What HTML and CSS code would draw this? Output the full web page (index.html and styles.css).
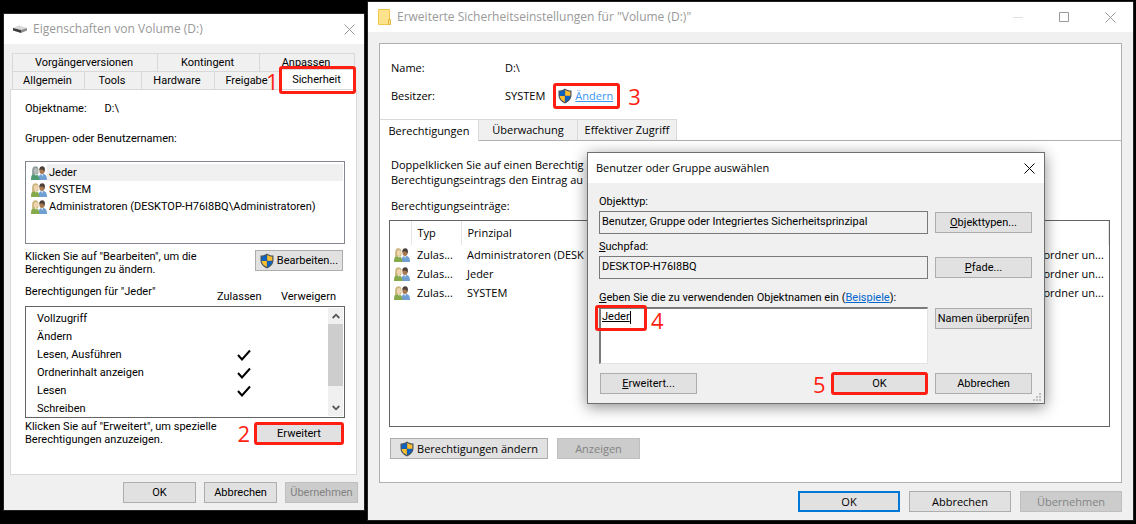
FILE: index.html
```html
<!DOCTYPE html>
<html lang="de">
<head>
    <meta charset="UTF-8">
    <meta name="viewport" content="width=device-width, initial-scale=1.0">
    <title>Volume (D:) - Berechtigungen</title>
    <link rel="stylesheet" href="styles.css">
</head>
<body>
    <!-- shared icons -->
    <svg class="sprite" aria-hidden="true">
        <symbol id="shield" viewBox="0 0 14 16">
            <path d="M7 .5C5 2 3 2.600 .5 2.600V7c0 4 2.500 6.500 6.500 8.500C11 13.500 13.500 11 13.500 7V2.600C11 2.600 9 2 7 .5z" fill="#4a5560"/>
            <path d="M6.800 2C5.200 3 3.500 3.600 1.700 3.700V7.800H6.800z" fill="#0a63c4"/>
            <path d="M7.200 2C8.800 3 10.500 3.600 12.300 3.700V7.800H7.200z" fill="#fdbf2d"/>
            <path d="M1.700 8H6.800V14.100C3.800 12.500 1.900 10.600 1.700 8z" fill="#fdbf2d"/>
            <path d="M12.300 8H7.200V14.100C10.200 12.500 12.100 10.600 12.300 8z" fill="#0a63c4"/>
        </symbol>
        <symbol id="users" viewBox="0 0 16 14">
            <path d="M7.500 14c0-4.500 1.200-6 4-6s4.500 1.500 4.500 6z" fill="#6f9fd2"/>
            <path d="M9.800 7.500h2.600l-1.200 3z" fill="#d9e6f2"/>
            <ellipse cx="11" cy="4.500" rx="2.600" ry="3.600" fill="#a87850"/>
            <path d="M8.300 4c0-2.800 1.400-3.700 3-3.700 1.800 0 2.900 1.400 2.500 4.200l-.8 1.500c0-2-.8-3-4.700-2z" fill="#4b4039"/>
            <path d="M0 14c0-4.500 1-6 3.800-6 2.600 0 4.200 1.300 4.700 6z" fill="var(--shirt, #86a94c)"/>
            <path d="M1.200 9C.8 3 1.500.3 4.500.3S7.800 3 7.200 8z" fill="var(--hair, #c9b57c)"/>
            <ellipse cx="4.900" cy="5" rx="2" ry="3" fill="var(--face, #efd6b0)"/>
            <path d="M3.800 8h2l-.8 2z" fill="#e8edd8"/>
        </symbol>
        <symbol id="close" viewBox="0 0 11 11">
            <path d="M.5.5l10 10M10.500.5l-10 10" fill="none" stroke="currentColor"/>
        </symbol>
        <symbol id="check" viewBox="0 0 14 12">
            <path d="M1 6l4 4.500L13 1.500" fill="none" stroke="#000" stroke-width="2"/>
        </symbol>
        <symbol id="chevron" viewBox="0 0 8 6">
            <path d="M.7 5L4 1.700 7.300 5" fill="none" stroke="#555" stroke-width="1.800"/>
        </symbol>
    </svg>

    <main class="desktop">
        <section class="window properties">
            <header class="titlebar">
                <svg class="drive" viewBox="0 0 14 8">
                    <path d="M0 3L6 .5l8 2.500-6 2z" fill="#d8d8d8"/>
                    <path d="M0 3l8 2v3L0 5.500z" fill="#3c3c3c"/>
                    <path d="M8 5l6-2v2.500L8 8z" fill="#8c8c8c"/>
                </svg>
                <h1>Eigenschaften von Volume (D:)</h1>
                <button class="win-btn" aria-label="Schließen"><svg><use href="#close"/></svg></button>
            </header>
            <div class="prop-body">
                <nav class="tabs">
                    <div class="tab-row back">
                        <button>Vorgängerversionen</button>
                        <button>Kontingent</button>
                        <button>Anpassen</button>
                    </div>
                    <div class="tab-row front">
                        <button>Allgemein</button>
                        <button>Tools</button>
                        <button>Hardware</button>
                        <button>Freigabe</button>
                        <button class="active">Sicherheit<span class="mark"></span><span class="step">1</span></button>
                    </div>
                </nav>
                <div class="sheet">
                    <p class="object"><span>Objektname:</span><span>D:\</span></p>
                    <p class="groups-label">Gruppen- oder Benutzernamen:</p>
                    <ul class="groups">
                        <li class="selected"><svg class="users teal"><use href="#users"/></svg><span>Jeder</span></li>
                        <li><svg class="users"><use href="#users"/></svg><span>SYSTEM</span></li>
                        <li><svg class="users"><use href="#users"/></svg><span>Administratoren (DESKTOP-H76I8BQ\Administratoren)</span></li>
                    </ul>
                    <div class="hint">
                        <p>Klicken Sie auf "Bearbeiten", um die<br>Berechtigungen zu ändern.</p>
                        <button class="btn edit"><svg class="shield"><use href="#shield"/></svg>Bearbeiten...</button>
                    </div>
                    <div class="perm-head">
                        <span>Berechtigungen für "Jeder"</span>
                        <span class="col">Zulassen</span>
                        <span class="col">Verweigern</span>
                    </div>
                    <div class="perm-box">
                        <table class="perms">
                            <tr><td>Vollzugriff</td><td></td></tr>
                            <tr><td>Ändern</td><td></td></tr>
                            <tr><td>Lesen, Ausführen</td><td><svg><use href="#check"/></svg></td></tr>
                            <tr><td>Ordnerinhalt anzeigen</td><td><svg><use href="#check"/></svg></td></tr>
                            <tr><td>Lesen</td><td><svg><use href="#check"/></svg></td></tr>
                            <tr><td>Schreiben</td><td></td></tr>
                        </table>
                        <div class="scrollbar">
                            <svg><use href="#chevron"/></svg>
                            <div class="thumb"></div>
                            <svg class="down"><use href="#chevron"/></svg>
                        </div>
                    </div>
                    <div class="hint advanced">
                        <p>Klicken Sie auf "Erweitert", um spezielle<br>Berechtigungen anzuzeigen.</p>
                        <button class="btn">Erweitert<span class="mark"></span><span class="step">2</span></button>
                    </div>
                </div>
                <footer class="actions">
                    <button class="btn">OK</button>
                    <button class="btn">Abbrechen</button>
                    <button class="btn" disabled>Übernehmen</button>
                </footer>
            </div>
        </section>

        <section class="window security">
            <header class="titlebar">
                <svg class="folder" viewBox="0 0 13 16">
                    <path d="M.5.5h11v15H.5z" fill="#ffe28c" stroke="#efc84a"/>
                    <path d="M10.500 10.500h2v5h-2z" fill="#ffe28c" stroke="#e0b83c"/>
                </svg>
                <h1>Erweiterte Sicherheitseinstellungen für "Volume (D:)"</h1>
                <button class="win-btn faint" aria-label="Minimieren"><svg viewBox="0 0 11 11"><path d="M0 5.500h10" stroke="currentColor"/></svg></button>
                <button class="win-btn" aria-label="Maximieren"><svg viewBox="0 0 11 11"><path d="M.5.5h9v9h-9z" fill="none" stroke="currentColor"/></svg></button>
                <button class="win-btn" aria-label="Schließen"><svg><use href="#close"/></svg></button>
            </header>
            <div class="sec-body">
                <div class="sec-panel">
                    <dl class="info">
                        <dt>Name:</dt>
                        <dd>D:\</dd>
                        <dt>Besitzer:</dt>
                        <dd>SYSTEM <span class="change"><svg class="shield"><use href="#shield"/></svg><a href="#">Ändern</a><span class="mark"></span><span class="step">3</span></span></dd>
                    </dl>
                    <nav class="sec-tabs">
                        <button class="active">Berechtigungen</button>
                        <button>Überwachung</button>
                        <button>Effektiver Zugriff</button>
                    </nav>
                    <div class="sec-content">
                        <p class="intro">Doppelklicken Sie auf einen Berechtig<br>Berechtigungseintrags den Eintrag au</p>
                        <p class="entries-label">Berechtigungseinträge:</p>
                        <div class="entries-box">
                            <table class="entries">
                                <thead>
                                    <tr><th class="c-icon"></th><th class="c-type">Typ</th><th>Prinzipal</th><th class="c-scope"></th></tr>
                                </thead>
                                <tbody>
                                    <tr><td><svg class="users"><use href="#users"/></svg></td><td>Zulas...</td><td>Administratoren (DESK</td><td>ordner un...</td></tr>
                                    <tr><td><svg class="users"><use href="#users"/></svg></td><td>Zulas...</td><td>Jeder</td><td>ordner un...</td></tr>
                                    <tr><td><svg class="users"><use href="#users"/></svg></td><td>Zulas...</td><td>SYSTEM</td><td>ordner un...</td></tr>
                                </tbody>
                            </table>
                        </div>
                        <div class="entry-actions">
                            <button class="btn wide"><svg class="shield"><use href="#shield"/></svg>Berechtigungen ändern</button>
                            <button class="btn" disabled>Anzeigen</button>
                        </div>
                    </div>
                </div>
                <footer class="actions">
                    <button class="btn default">OK</button>
                    <button class="btn">Abbrechen</button>
                    <button class="btn" disabled>Übernehmen</button>
                </footer>
            </div>

            <div class="dialog" role="dialog" aria-label="Benutzer oder Gruppe auswählen">
                <header class="titlebar">
                    <h2>Benutzer oder Gruppe auswählen</h2>
                    <button class="win-btn" aria-label="Schließen"><svg><use href="#close"/></svg></button>
                </header>
                <form class="dialog-form">
                    <label for="type">Objekttyp:</label>
                    <input id="type" type="text" readonly value="Benutzer, Gruppe oder Integriertes Sicherheitsprinzipal">
                    <button type="button" class="btn"><u>O</u>bjekttypen...</button>
                    <label for="path"><u>S</u>uchpfad:</label>
                    <input id="path" type="text" readonly value="DESKTOP-H76I8BQ">
                    <button type="button" class="btn"><u>P</u>fade...</button>
                    <label for="names" class="names-label"><u>G</u>eben Sie die zu verwendenden Objektnamen ein (<a href="#">Beispiele</a>):</label>
                    <div class="names">
                        <textarea id="names">Jeder</textarea>
                        <span class="caret"></span>
                        <span class="mark"></span>
                        <span class="step">4</span>
                    </div>
                    <button type="button" class="btn"><span>Namen überprü<u>f</u>en</span></button>
                    <div class="dialog-actions">
                        <button type="button" class="btn"><u>E</u>rweitert...</button>
                        <button type="button" class="btn ok">OK<span class="mark"></span><span class="step">5</span></button>
                        <button type="button" class="btn">Abbrechen</button>
                    </div>
                </form>
                <svg class="grip" viewBox="0 0 8 8">
                    <path d="M6 0h2v2H6zM3 3h2v2H3zM6 3h2v2H6zM0 6h2v2H0zM3 6h2v2H3zM6 6h2v2H6z" fill="#bfbfbf"/>
                </svg>
            </div>
        </section>
    </main>
</body>
</html>
```
FILE: styles.css
```css
* {
    box-sizing: border-box;
}

body {
    margin: 0;
    background: #000;
    color: #000;
    font: 11px/16px "Open Sans", "Noto Sans", sans-serif;
}

h1, h2, p, ul, dl, dd {
    margin: 0;
    padding: 0;
    font-size: 11px;
    font-weight: normal;
}

button, input, textarea {
    font: inherit;
    color: inherit;
    border-radius: 0;
}

.sprite {
    position: absolute;
    width: 0;
    height: 0;
}

.desktop {
    display: flex;
    align-items: flex-start;
    gap: 2px;
    padding: 1px 2px 3px 3px;
}

/* windows */
.window {
    border: 1px solid #222;
    background: #f0f0f0;
}

.titlebar {
    display: flex;
    align-items: center;
    height: 30px;
    background: #fff;
    color: #999;
}

.titlebar h1, .titlebar h2 {
    flex: 1;
    white-space: nowrap;
}

.window > .titlebar h1 {
    font-size: 12px;
}

.win-btn {
    width: 46px;
    height: 30px;
    padding: 0;
    border: 0;
    background: none;
    line-height: 0;
}

.win-btn svg {
    width: 11px;
    height: 11px;
}

.win-btn.faint {
    color: #e0e0e0;
}

/* buttons */
.btn {
    position: relative;
    display: flex;
    align-items: center;
    justify-content: center;
    height: 21px;
    padding: 0;
    border: 1px solid #adadad;
    background: #e1e1e1;
    white-space: nowrap;
}

.btn:disabled {
    border-color: #bfbfbf;
    background: #ccc;
    color: #838383;
}

.btn.default {
    border: 2px solid #0078d7;
}

.actions {
    display: flex;
    justify-content: flex-end;
    gap: 8px;
}

.shield {
    width: 14px;
    height: 16px;
    margin-right: 3px;
}

.users {
    width: 16px;
    height: 14px;
    flex: none;
}

.users.teal {
    --shirt: #4f9a72;
    --hair: #8f9c9c;
    --face: #b4bcb8;
}

/* red markers */
.mark {
    position: absolute;
    inset: -2px;
    border: 3px solid #ff1f12;
    border-radius: 3px;
    pointer-events: none;
}

.step {
    position: absolute;
    color: #ff1f12;
    font: 22px/24px "Open Sans", "Noto Sans", sans-serif;
}

/* properties window */
.properties {
    flex: none;
    width: 362px;
    margin-top: 12px;
    font-family: "Roboto", sans-serif;
}

.properties .titlebar {
    padding-left: 9px;
    font-family: "Open Sans", "Noto Sans", sans-serif;
}

.properties .win-btn {
    width: 30px;
}

.drive {
    width: 14px;
    height: 8px;
    margin-right: 6px;
}

.prop-body {
    padding: 9px 7px 7px 6px;
}

.tabs {
    padding: 0 2px;
}

.tab-row {
    display: grid;
}

.tab-row.back {
    grid-template-columns: 145fr 102fr 96fr;
}

.tab-row.front {
    grid-template-columns: 72fr 57fr 73fr 66fr 75fr;
}

.tab-row button {
    position: relative;
    height: 18px;
    padding: 0 2px 0 0;
    border: 1px solid #d9d9d9;
    border-width: 1px 0 0 1px;
    background: #f0f0f0;
    line-height: 17px;
}

.tab-row button:last-child {
    border-right-width: 1px;
}

.tab-row .active {
    background: #fff;
    height: 20px;
    margin: -2px 0 0;
}

.tab-row .mark {
    inset: -4px -2px -5px;
}

.tab-row .step {
    top: -1px;
    left: -15px;
}

.sheet {
    padding: 11px 11px 28px 14px;
    border: 1px solid #d9d9d9;
    background: #fff;
}

.object {
    display: flex;
    gap: 18px;
}

.groups-label {
    margin-top: 14px;
}

.groups {
    height: 83px;
    margin-top: 14px;
    padding: 2px 1px 1px 5px;
    border: 1px solid #828790;
    list-style: none;
}

.groups li {
    display: flex;
    align-items: center;
    height: 17px;
}

.groups span {
    flex: 1;
    padding-left: 2px;
    line-height: 17px;
}

.groups .selected span {
    background: #f0f0f0;
}

.hint {
    display: flex;
    justify-content: space-between;
    margin-top: 6px;
    padding-right: 2px;
    line-height: 13px;
}

.hint .btn {
    width: 88px;
}

.perm-head {
    display: flex;
    align-items: flex-start;
    height: 22px;
    margin-top: 8px;
}

.perm-head span:first-child {
    flex: 1;
}

.perm-head .col {
    width: 64px;
    padding-top: 5px;
}

.perm-box {
    display: flex;
    height: 112px;
    border: 1px solid #646464;
    padding: 1px;
    overflow: hidden;
}

.perms {
    flex: 1;
    align-self: flex-start;
    margin-top: 2px;
    border-collapse: collapse;
}

.perms td {
    height: 18px;
    padding: 0 0 0 10px;
}

.perms td:last-child {
    width: 91px;
    padding: 0;
}

.perms svg {
    display: block;
    width: 14px;
    height: 12px;
}

.scrollbar {
    display: flex;
    flex-direction: column;
    align-items: center;
    width: 15px;
    background: #f0f0f0;
}

.scrollbar svg {
    width: 8px;
    height: 6px;
    margin: 5px 0;
}

.scrollbar .down {
    margin-top: auto;
    transform: rotate(180deg);
}

.thumb {
    width: 15px;
    height: 62px;
    background: #cdcdcd;
}

.advanced {
    margin-top: 2px;
}

.advanced .btn {
    margin-top: 3px;
}

.advanced .step {
    top: -3px;
    right: 92px;
}

.properties .actions {
    margin: 7px -1px 0 0;
}

.properties .actions .btn {
    width: 73px;
}

/* advanced security window */
.security {
    position: relative;
    flex: 1;
    min-width: 0;
}

.security > .titlebar {
    padding-left: 10px;
}

.folder {
    width: 13px;
    height: 16px;
    margin-right: 6px;
}

.sec-body {
    padding: 11px 11px 8px;
}

.sec-panel {
    border: 1px solid #b0b0b0;
    background: #fff;
}

.info {
    display: grid;
    grid-template-columns: 114px 1fr;
    gap: 12px 0;
    padding: 16px 11px 15px;
}

.info dd {
    display: flex;
    height: 16px;
}

.change {
    position: relative;
    display: flex;
    margin-left: 13px;
}

.change a {
    color: #3a96f0;
}

.change .mark {
    inset: -5px -7px -5px -5px;
}

.change .step {
    top: -4px;
    left: 70px;
}

.sec-tabs {
    display: flex;
    border-bottom: 1px solid #b0b0b0;
}

.sec-tabs button {
    height: 21px;
    padding: 0 6px;
    min-width: 99px;
    border: 1px solid #d9d9d9;
    border-left: 0;
    border-bottom: 0;
    background: #f0f0f0;
    line-height: 20px;
}

.sec-tabs .active {
    background: #fff;
    margin-bottom: -1px;
    height: 22px;
}

.sec-content {
    padding: 16px 11px 23px 9px;
}

.intro, .entries-label {
    padding-left: 2px;
    line-height: 15px;
    white-space: nowrap;
}

.entries-label {
    margin-top: 11px;
}

.entries-box {
    height: 207px;
    margin-top: 7px;
    border: 1px solid #646464;
    overflow: hidden;
}

.entries {
    width: 100%;
    table-layout: fixed;
    border-collapse: collapse;
}

.entries th {
    height: 24px;
    padding: 0 0 0 6px;
    border-right: 1px solid #e5e5e5;
    font-weight: normal;
    text-align: left;
}

.entries td {
    height: 19px;
    padding: 0 0 0 6px;
    white-space: nowrap;
}

.entries td:first-child {
    padding-left: 4px;
    line-height: 0;
}

.c-icon {
    width: 21px;
}

.c-type {
    width: 50px;
}

.c-scope {
    width: 71px;
}

.entry-actions {
    display: flex;
    gap: 9px;
    margin-top: 11px;
    padding-left: 1px;
}

.entry-actions .btn {
    width: 83px;
}

.entry-actions .wide {
    width: 158px;
}

.security .actions {
    gap: 9px;
    margin-top: 8px;
}

.security .actions .btn {
    width: 102px;
}

/* select user dialog */
.dialog {
    position: absolute;
    top: 150px;
    right: 88px;
    width: 458px;
    border: 1px solid #6e6e6e;
    background: #f0f0f0;
    box-shadow: 0 3px 14px rgba(0, 0, 0, 0.45);
    font-family: "Roboto", sans-serif;
}

.dialog .titlebar {
    padding-left: 8px;
    color: #000;
    font-family: "Open Sans", "Noto Sans", sans-serif;
}

.dialog .win-btn {
    width: 30px;
}

.dialog-form {
    display: grid;
    grid-template-columns: 1fr 97px;
    column-gap: 7px;
    padding: 11px 12px 9px 11px;
}

.dialog-form label {
    grid-column: 1 / -1;
    height: 17px;
    line-height: 16px;
}

.dialog-form input {
    height: 23px;
    min-width: 0;
    margin-bottom: 5px;
    padding: 0 2px 2px;
    border: 1px solid #7a7a7a;
    background: #f0f0f0;
}

.dialog-form > .btn {
    margin-top: 1px;
}

.dialog-form a {
    color: #0066cc;
}

.dialog-form .names-label {
    margin-top: 6px;
}

.names {
    position: relative;
    height: 57px;
}

.names textarea {
    display: block;
    width: 100%;
    height: 57px;
    padding: 0 1px;
    border: 1px solid #e3e3e3;
    border-top: 2px solid #7a7a7a;
    border-left: 2px solid #7a7a7a;
    background: #fff;
    text-decoration: underline;
    resize: none;
    outline: 0;
}

.caret {
    position: absolute;
    top: 4px;
    left: 31px;
    width: 1px;
    height: 13px;
    background: #000;
}

.names .mark {
    inset: -2px auto auto -4px;
    width: 52px;
    height: 26px;
}

.names .step {
    top: 1px;
    left: 52px;
}

.dialog-actions {
    grid-column: 1 / -1;
    display: grid;
    grid-template-columns: 97px 1fr 97px;
    gap: 8px;
    margin-top: 9px;
    padding-left: 1px;
}

.dialog-actions .ok {
    width: 95px;
    justify-self: end;
}

.dialog-actions .step {
    left: -20px;
}

.grip {
    position: absolute;
    right: 3px;
    bottom: 2px;
    width: 8px;
    height: 8px;
}
```
